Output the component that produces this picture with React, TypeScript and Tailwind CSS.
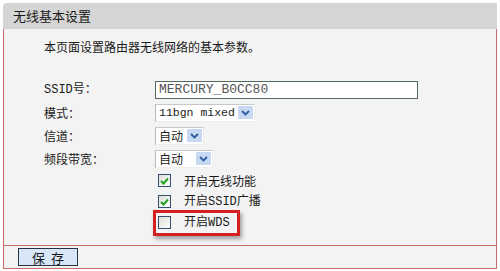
import React, { useState } from 'react';

const FONT = '"Liberation Mono", "Noto Sans CJK SC", monospace';
const CJK = '"Noto Sans CJK SC", "Liberation Sans", sans-serif';

const Arrow: React.FC = () => (
  <span className="flex h-[13px] w-[15px] shrink-0 items-center justify-center rounded-[1px] bg-[#c6d8f2]">
    <svg width="9" height="6" viewBox="0 0 9 6">
      <path d="M1 1 L4.5 4.5 L8 1" fill="none" stroke="#2d5ca8" strokeWidth="1.8" />
    </svg>
  </span>
);

interface SelectBoxProps {
  value: string;
  width: string;
  cjk?: boolean;
}

const SelectBox: React.FC<SelectBoxProps> = ({ value, width, cjk }) => (
  <div
    className={`flex h-[18px] items-center justify-between border-l border-t border-l-[#b8b8b8] border-t-[#c8c8c8] border-r border-b border-r-[#eeeeee] border-b-[#eeeeee] bg-white pl-[3px] pr-[1px] ${width}`}
  >
    <span
      className={`whitespace-nowrap leading-none text-[#1a1a1a] ${cjk ? 'text-[12px]' : 'text-[11.5px]'}`}
      style={{ fontFamily: cjk ? CJK : FONT }}
    >
      {value}
    </span>
    <Arrow />
  </div>
);

const CheckBox: React.FC<{ checked: boolean; onClick: () => void }> = ({ checked, onClick }) => (
  <button
    onClick={onClick}
    className="flex h-[13px] w-[13px] items-center justify-center border border-[#33506e] bg-gradient-to-br from-[#dcdcd7] to-white"
  >
    {checked && (
      <svg width="9" height="8" viewBox="0 0 9 8">
        <path d="M1 4 L3.5 6.5 L8 1.5" fill="none" stroke="#21a121" strokeWidth="2" />
      </svg>
    )}
  </button>
);

const App: React.FC = () => {
  const [wireless, setWireless] = useState(true);
  const [ssidBroadcast, setSsidBroadcast] = useState(true);
  const [wds, setWds] = useState(false);

  return (
    <div className="h-[271px] w-[500px] bg-white px-[3px] pt-[3px]" style={{ fontFamily: CJK }}>
      <div className="flex h-[26px] items-center rounded-tl-[4px] bg-[#d5d5d5] pl-[10px] text-[13px] text-[#1a1a1a]">
        无线基本设置
      </div>

      <div className="flex flex-col border-x border-[#cf6a6a] bg-[#f3f3f3]">
        <div className="h-[216px] pl-[40px] pt-[9px]">
          <p className="h-[18px] text-[12px] leading-[18px] text-[#1a1a1a]">本页面设置路由器无线网络的基本参数。</p>

          <div className="mt-[22px] flex flex-col text-[12px] text-[#1a1a1a]">
            <div className="flex h-[23px] items-center">
              <span className="w-[111px]" style={{ fontFamily: FONT }}>
                SSID号：
              </span>
              <div className="flex h-[18px] w-[263px] items-center border border-[#55695f] bg-white pl-[3px]">
                <span className="text-[13px] leading-none text-[#555]" style={{ fontFamily: FONT }}>
                  MERCURY_B0CC80
                </span>
              </div>
            </div>
            <div className="flex h-[23px] items-center">
              <span className="w-[111px]">模式：</span>
              <SelectBox value="11bgn mixed" width="w-[100px]" />
            </div>
            <div className="flex h-[23px] items-center">
              <span className="w-[111px]">信道：</span>
              <SelectBox value="自动" width="w-[49px]" cjk />
            </div>
            <div className="flex h-[23px] items-center">
              <span className="w-[111px]">频段带宽：</span>
              <SelectBox value="自动" width="w-[58px]" cjk />
            </div>

            <div className="flex h-[21px] items-center pl-[114px]">
              <CheckBox checked={wireless} onClick={() => setWireless(!wireless)} />
              <span className="ml-[13px]">开启无线功能</span>
            </div>
            <div className="flex h-[21px] items-center pl-[114px]">
              <CheckBox checked={ssidBroadcast} onClick={() => setSsidBroadcast(!ssidBroadcast)} />
              <span className="ml-[13px]" style={{ fontFamily: FONT }}>
                开启SSID广播
              </span>
            </div>
            <div className="relative flex h-[21px] items-center pl-[114px]">
              <CheckBox checked={wds} onClick={() => setWds(!wds)} />
              <span className="ml-[13px]" style={{ fontFamily: FONT }}>
                开启WDS
              </span>
              {/* highlight annotation */}
              <div className="pointer-events-none absolute left-[109px] top-[-2px] h-[26px] w-[87px] border-[3px] border-[#d42020] shadow-[2px_3px_4px_rgba(0,0,0,0.35)]" />
            </div>
          </div>
        </div>

        <div className="flex h-[24px] items-center border-y border-[#cf6a6a] pl-[14px]">
          <button className="flex h-[18px] w-[60px] items-center justify-center gap-[6px] border border-[#2a3340] bg-[#d8e7f7] text-[13px] leading-none text-[#1a1a1a]">
            <span>保</span>
            <span>存</span>
          </button>
        </div>
      </div>
    </div>
  );
};

export default App;
